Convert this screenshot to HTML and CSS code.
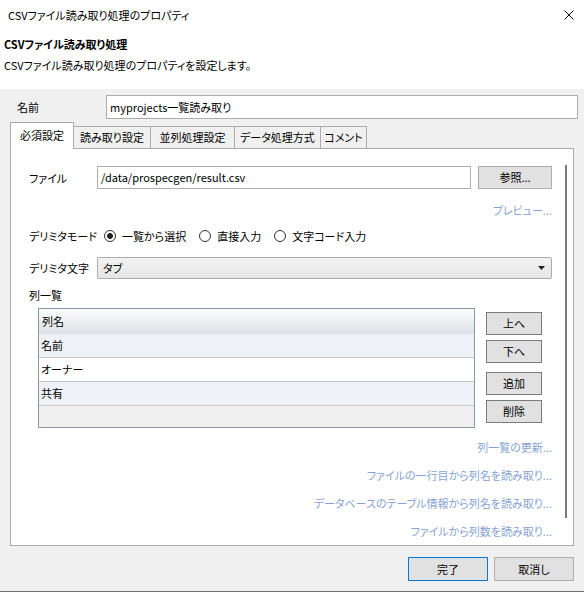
FILE: index.html
```html
<!DOCTYPE html>
<html>
<head>
	<meta charset="utf-8">
	<title>CSVファイル読み取り処理のプロパティ</title>
	<link rel="stylesheet" href="styles.css">
</head>
<body>

	<section class="window">

		<!-- TITLE BAR -->
		<section class="titlebar">
			<span class="title">CSVファイル読み取り処理のプロパティ</span>
			<svg class="close" width="10" height="10" viewBox="0 0 10 10">
				<path d="M0.5 0.5 L9.5 9.5 M9.5 0.5 L0.5 9.5" stroke="#111" stroke-width="1"/>
			</svg>
		</section>

		<!-- HEADER -->
		<section class="header">
			<div class="header-title">CSVファイル読み取り処理</div>
			<div class="header-desc">CSVファイル読み取り処理のプロパティを設定します。</div>
		</section>

		<!-- NAME -->
		<section class="name-row">
			<span class="name-label">名前</span>
			<div class="textbox name-box">myprojects一覧読み取り</div>
		</section>

		<!-- TABS -->
		<nav class="tabs">
			<div class="tab active w1">必須設定</div>
			<div class="tab w2">読み取り設定</div>
			<div class="tab w3">並列処理設定</div>
			<div class="tab w4">データ処理方式</div>
			<div class="tab w5">コメント</div>
		</nav>

		<section class="panel">
			<section class="panel-body">

				<div class="row file-row">
					<span class="label">ファイル</span>
					<div class="textbox file-box">/data/prospecgen/result.csv</div>
					<div class="btn browse">参照...</div>
				</div>

				<div class="link preview">プレビュー...</div>

				<div class="row mode-row">
					<span class="label">デリミタモード</span>
					<label class="radio checked"><i></i>一覧から選択</label>
					<label class="radio"><i></i>直接入力</label>
					<label class="radio"><i></i>文字コード入力</label>
				</div>

				<div class="row combo-row">
					<span class="label">デリミタ文字</span>
					<div class="combo">
						<span>タブ</span>
						<svg width="7" height="4" viewBox="0 0 7 4"><path d="M0 0 L7 0 L3.5 4 Z" fill="#222"/></svg>
					</div>
				</div>

				<div class="list-label">列一覧</div>

				<div class="list-row">
					<div class="grid">
						<div class="grid-head">列名</div>
						<div class="grid-cell alt">名前</div>
						<div class="grid-cell">オーナー</div>
						<div class="grid-cell alt">共有</div>
						<div class="grid-empty"></div>
					</div>
					<div class="list-buttons">
						<div class="btn small">上へ</div>
						<div class="btn small">下へ</div>
						<div class="btn small sep">追加</div>
						<div class="btn small">削除</div>
					</div>
				</div>

				<div class="links">
					<div class="link">列一覧の更新...</div>
					<div class="link">ファイルの一行目から列名を読み取り...</div>
					<div class="link">データベースのテーブル情報から列名を読み取り...</div>
					<div class="link">ファイルから列数を読み取り...</div>
				</div>

			</section>
			<figure class="vscroll"></figure>
		</section>

		<!-- DIALOG BUTTONS -->
		<section class="footer">
			<div class="btn dlg default">完了</div>
			<div class="btn dlg">取消し</div>
		</section>

	</section>

</body>
</html>
```

FILE: styles.css
```css
body {
	margin:0;
	padding:0;
	font-family: "Noto Sans CJK JP", "Noto Sans", sans-serif;
	font-size:11px;
	font-feature-settings: "palt";
	color:#000;
}

div, figure, section, nav, label {
	margin:0; padding:0; box-sizing: border-box;
}

.window {
	width:584px;
	height:592px;
	background:#f0f0f0;
	border-bottom:1px solid #6f6f6f;
	display:flex;
	flex-direction:column;
}

/* title bar + header share the white strip */
.titlebar {
	height:30px;
	background:#fff;
	display:flex;
	align-items:center;
	justify-content:space-between;
	padding:0 10px 0 8px;
}

.header {
	height:59px;
	background:#fff;
	padding:5px 0 0 4px;
}

.header-title {
	font-weight:bold;
	line-height:18px;
}

.header-desc {
	line-height:18px;
	margin-top:3px;
}

.name-row {
	display:flex;
	align-items:center;
	margin-top:6px;
	padding-left:17px;
	padding-right:6px;
}

.name-label { width:89px; }

.textbox {
	background:#fff;
	border:1px solid #adadad;
	height:24px;
	line-height:22px;
	padding-left:3px;
	white-space:nowrap;
}

.name-box { flex:1; }

/* tabs */
.tabs {
	display:flex;
	align-items:flex-end;
	height:26px;
	margin-top:3px;
	padding-left:10px;
}

.tab {
	height:22px;
	line-height:21px;
	text-align:center;
	border:1px solid #acacac;
	border-bottom:none;
	margin-left:-1px;
	background:#f0f0f0;
	white-space:nowrap;
}

.tab.active {
	height:27px;
	line-height:25px;
	background:#fff;
	margin-left:0;
	margin-bottom:-1px;
	position:relative;
	z-index:1;
}

.w1 { width:64px; }
.w2 { width:78px; }
.w3 { width:85px; }
.w4 { width:87px; }
.w5 { width:47px; }

.panel {
	margin-left:10px;
	width:564px;
	height:398px;
	background:#fff;
	border:1px solid #acacac;
	display:flex;
}

.panel-body {
	flex:1;
	padding:17px 13px 0 18px;
}

.vscroll {
	width:2px;
	background:#7a7a7a;
	margin:16px 6px 27px 0;
}

.row {
	display:flex;
	align-items:center;
}

.label { width:68px; white-space:nowrap; }

.file-box {
	flex:1;
	height:23px;
	line-height:21px;
}

.btn {
	background:#e1e1e1;
	border:1px solid #adadad;
	text-align:center;
}

.browse {
	width:74px;
	height:23px;
	line-height:21px;
	margin-left:7px;
}

.link {
	color:#86a3d4;
	text-align:right;
	line-height:16px;
}

.preview { margin-top:13px; }

.mode-row {
	margin-top:10px;
	height:16px;
}

.radio {
	display:flex;
	align-items:center;
	margin-right:13px;
	white-space:nowrap;
}

.radio:first-of-type { margin-left:7px; }

.radio i {
	display:block;
	width:12px;
	height:12px;
	border:1px solid #333;
	border-radius:50%;
	margin-right:6px;
	box-sizing:border-box;
}

.radio.checked i {
	background:radial-gradient(circle, #222 0 2.6px, #fff 3.2px);
}

.combo-row { margin-top:13px; }

.combo {
	flex:1;
	height:22px;
	border:1px solid #acacac;
	border-radius:2px;
	background:linear-gradient(#f2f2f2, #e6e6e6);
	display:flex;
	align-items:center;
	justify-content:space-between;
	padding:0 6px 0 5px;
}

.list-label {
	margin-top:8px;
	line-height:16px;
}

.list-row {
	display:flex;
	align-items:flex-start;
	margin-top:5px;
	padding-left:9px;
	padding-right:10px;
}

.grid {
	flex:1;
	height:120px;
	border:1px solid #8497ad;
	display:flex;
	flex-direction:column;
	background:#f0f0f0;
}

.grid-head {
	height:25px;
	line-height:25px;
	padding-left:3px;
	background:linear-gradient(#fbfcfd, #dde1e6);
}

.grid-cell {
	height:24px;
	line-height:23px;
	padding-left:2px;
	background:#fff;
	border-bottom:1px solid #c9c9c9;
}

.grid-cell.alt { background:#eef1f5; }

.list-buttons {
	display:flex;
	flex-direction:column;
	margin-left:11px;
	margin-top:4px;
}

.btn.small {
	width:56px;
	height:23px;
	line-height:21px;
	border-color:#7a7a7a;
	margin-bottom:5px;
}

.btn.small.sep { margin-top:4px; }

.links {
	display:flex;
	flex-direction:column;
	gap:12px;
	margin-top:11px;
}

.footer {
	display:flex;
	justify-content:flex-end;
	gap:6px;
	padding:11px 10px 0 0;
}

.btn.dlg {
	width:80px;
	height:24px;
	line-height:22px;
}

.btn.dlg.default { border-color:#0078d7; }
```
